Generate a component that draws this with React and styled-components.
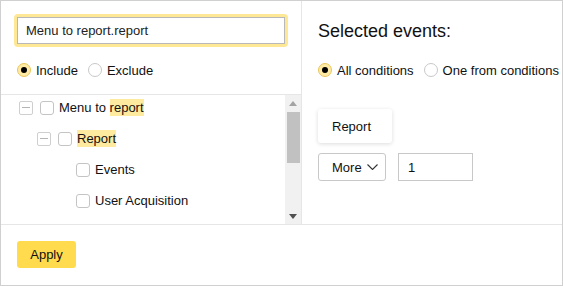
import React from "react";
import styled, { createGlobalStyle } from "styled-components";

const Global = createGlobalStyle`
  html, body { margin: 0; padding: 0; background: #fff; }
  body { font-family: "Liberation Sans", Arial, sans-serif; font-size: 13px; color: #000; }
  * { box-sizing: border-box; }
`;

const Frame = styled.div`
  width: 563px;
  height: 286px;
  border: 1px solid #d0d0d0;
  display: flex;
  flex-direction: column;
  background: #fff;
`;

const Main = styled.div`
  display: flex;
  height: 223px;
`;

const LeftPanel = styled.div`
  width: 301px;
  border-right: 1px solid #e6e6e6;
  display: flex;
  flex-direction: column;
`;

const SearchSection = styled.div`
  padding: 13px 13px 16px;
  border-bottom: 1px solid #e6e6e6;
`;

const FocusRing = styled.div`
  padding: 3px;
  background: #fee795;
  border-radius: 4px;
  width: 274px;
`;

const SearchInput = styled.input`
  display: block;
  width: 100%;
  height: 27px;
  border: 1px solid #b8b8b8;
  padding: 0 8px;
  font: inherit;
  font-size: 13px;
  color: #222;
  outline: none;
  background: #fff;
`;

const RadioGroup = styled.div`
  display: flex;
  align-items: center;
  height: 16px;
  margin-top: ${(p) => p.$mt || 0}px;
  padding-left: ${(p) => p.$pl || 0}px;
  white-space: nowrap;
`;

const RadioLabel = styled.label`
  display: flex;
  align-items: center;
  gap: 5px;
  margin-right: 10px;
  color: #111;
`;

const RadioCircle = styled.span`
  width: 14px;
  height: 14px;
  border-radius: 50%;
  flex: none;
  display: flex;
  align-items: center;
  justify-content: center;
  border: 1px solid ${(p) => (p.$checked ? "#e7c65e" : "#c8c8c8")};
  background: ${(p) => (p.$checked ? "#ffeba3" : "#fff")};
  &::after {
    content: "";
    display: ${(p) => (p.$checked ? "block" : "none")};
    width: 6px;
    height: 6px;
    border-radius: 50%;
    background: #000;
  }
`;

const TreeArea = styled.div`
  flex: 1;
  display: flex;
  overflow: hidden;
`;

const TreeList = styled.div`
  flex: 1;
  margin-top: -3px;
  padding-left: 18px;
`;

const TreeRow = styled.div`
  height: 31px;
  display: flex;
  align-items: center;
  padding-left: ${(p) => p.$level * 18}px;
  color: #111;
`;

const Expander = styled.span`
  width: 14px;
  height: 14px;
  flex: none;
  margin-right: 7px;
  border: ${(p) => (p.$hidden ? "none" : "1px solid #cfcfcf")};
  border-radius: 2px;
  display: flex;
  align-items: center;
  justify-content: center;
  &::after {
    content: "";
    display: ${(p) => (p.$hidden ? "none" : "block")};
    width: 8px;
    height: 1px;
    background: #b5b5b5;
  }
`;

const Checkbox = styled.span`
  width: 14px;
  height: 14px;
  flex: none;
  border: 1px solid #c4c4c4;
  border-radius: 3px;
  margin-right: 5px;
  background: #fff;
`;

const Mark = styled.span`
  background: #ffeba0;
  padding: 1px 0;
`;

const Scrollbar = styled.div`
  width: 16px;
  background: #f1f1f1;
  display: flex;
  flex-direction: column;
  align-items: center;
`;

const ArrowBox = styled.div`
  height: 16px;
  width: 16px;
  display: flex;
  align-items: center;
  justify-content: center;
`;

const Thumb = styled.div`
  width: 13px;
  height: 51px;
  background: #c1c1c1;
  margin-top: 1px;
`;

const Spacer = styled.div`
  flex: 1;
`;

const RightPanel = styled.div`
  flex: 1;
  padding: 20px 0 0 16px;
  overflow: hidden;
`;

const Title = styled.div`
  font-size: 18px;
  line-height: 21px;
  color: #111;
`;

const Card = styled.div`
  margin-top: 31px;
  width: 74px;
  height: 34px;
  border-radius: 3px;
  box-shadow: 0 1px 4px rgba(0, 0, 0, 0.14);
  display: flex;
  align-items: center;
  padding-left: 14px;
  color: #111;
`;

const Controls = styled.div`
  display: flex;
  gap: 12px;
  margin-top: 10px;
`;

const MoreButton = styled.button`
  width: 68px;
  height: 28px;
  border: 1px solid #c8c8c8;
  border-radius: 3px;
  background: #fff;
  font: inherit;
  font-size: 13px;
  color: #111;
  display: flex;
  align-items: center;
  padding: 0 0 0 13px;
  gap: 5px;
`;

const CountInput = styled.input`
  width: 75px;
  height: 28px;
  border: 1px solid #c8c8c8;
  padding: 0 9px;
  font: inherit;
  font-size: 13px;
  color: #111;
  outline: none;
`;

const Footer = styled.div`
  flex: 1;
  border-top: 1px solid #e6e6e6;
  padding: 16px 16px;
`;

const ApplyButton = styled.button`
  width: 59px;
  height: 27px;
  border: none;
  border-radius: 3px;
  background: #ffdb4d;
  font: inherit;
  font-size: 13px;
  color: #111;
  padding: 0;
`;

const Radio = ({ checked, children }) => (
  <RadioLabel>
    <RadioCircle $checked={checked} />
    {children}
  </RadioLabel>
);

export default function App() {
  return (
    <>
      <Global />
      <Frame>
        <Main>
          <LeftPanel>
            <SearchSection>
              <FocusRing>
                <SearchInput defaultValue="Menu to report.report" />
              </FocusRing>
              <RadioGroup $mt={15} $pl={3}>
                <Radio checked>Include</Radio>
                <Radio>Exclude</Radio>
              </RadioGroup>
            </SearchSection>
            <TreeArea>
              <TreeList>
                <TreeRow $level={0}>
                  <Expander />
                  <Checkbox />
                  <span>
                    Menu to <Mark>report</Mark>
                  </span>
                </TreeRow>
                <TreeRow $level={1}>
                  <Expander />
                  <Checkbox />
                  <Mark>Report</Mark>
                </TreeRow>
                <TreeRow $level={2}>
                  <Expander $hidden />
                  <Checkbox />
                  <span>Events</span>
                </TreeRow>
                <TreeRow $level={2}>
                  <Expander $hidden />
                  <Checkbox />
                  <span>User Acquisition</span>
                </TreeRow>
              </TreeList>
              <Scrollbar>
                <ArrowBox>
                  <svg width="8" height="5" viewBox="0 0 8 5">
                    <path d="M0 5 L4 0 L8 5 Z" fill="#a3a3a3" />
                  </svg>
                </ArrowBox>
                <Thumb />
                <Spacer />
                <ArrowBox>
                  <svg width="8" height="5" viewBox="0 0 8 5">
                    <path d="M0 0 L8 0 L4 5 Z" fill="#505050" />
                  </svg>
                </ArrowBox>
              </Scrollbar>
            </TreeArea>
          </LeftPanel>
          <RightPanel>
            <Title>Selected events:</Title>
            <RadioGroup $mt={20}>
              <Radio checked>All conditions</Radio>
              <Radio>One from conditions</Radio>
            </RadioGroup>
            <Card>Report</Card>
            <Controls>
              <MoreButton>
                More
                <svg width="11" height="6" viewBox="0 0 11 6">
                  <path d="M0.5 0.5 L5.5 5.5 L10.5 0.5" fill="none" stroke="#333" strokeWidth="1.1" />
                </svg>
              </MoreButton>
              <CountInput defaultValue="1" />
            </Controls>
          </RightPanel>
        </Main>
        <Footer>
          <ApplyButton>Apply</ApplyButton>
        </Footer>
      </Frame>
    </>
  );
}
